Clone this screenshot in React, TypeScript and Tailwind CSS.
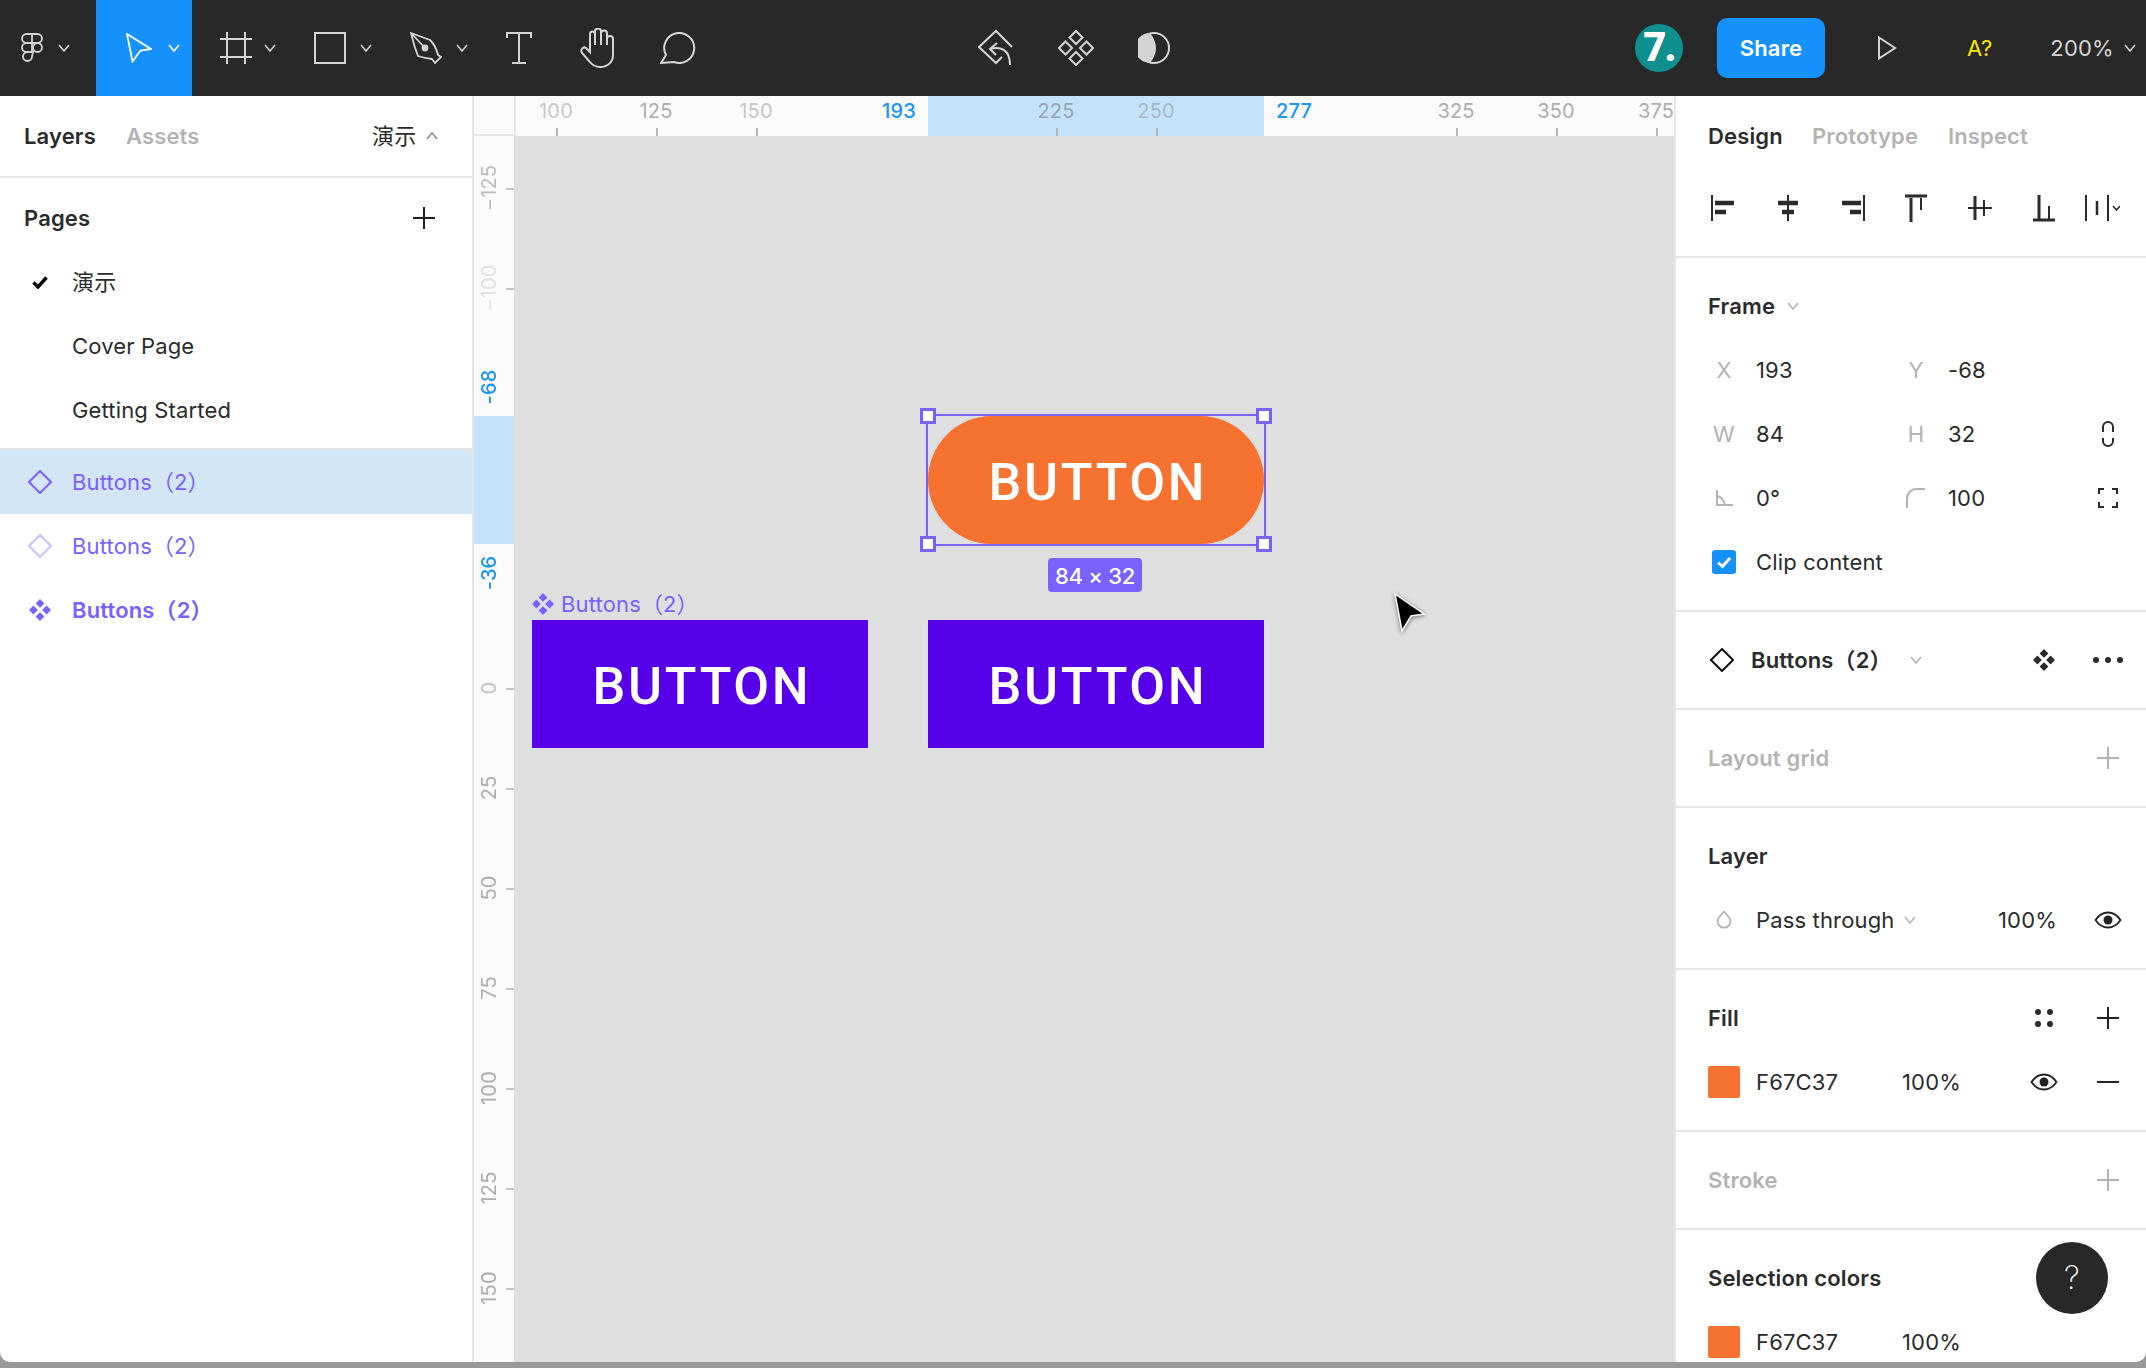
import React from 'react';

const PURPLE = '#7b61ff';

// ruler scale: 1 unit = 4px on screen
const TOP_TICKS = [
  { v: 100, c: 'text-[#c9c9c9]' },
  { v: 125, c: 'text-[#adadad]' },
  { v: 150, c: 'text-[#c6c6c6]' },
  { v: 225, c: 'text-[#98a6b1]' },
  { v: 250, c: 'text-[#a9b8c3]' },
  { v: 325, c: 'text-[#adadad]' },
  { v: 350, c: 'text-[#adadad]' },
  { v: 375, c: 'text-[#adadad]' },
];
const SIDE_TICKS = [
  { v: -125, c: 'text-[#bdbdbd]' },
  { v: -100, c: 'text-[#e2e2e2]' },
  { v: 0, c: 'text-[#c4c4c4]' },
  { v: 25, c: 'text-[#adadad]' },
  { v: 50, c: 'text-[#adadad]' },
  { v: 75, c: 'text-[#adadad]' },
  { v: 100, c: 'text-[#adadad]' },
  { v: 125, c: 'text-[#adadad]' },
  { v: 150, c: 'text-[#adadad]' },
];

function Chevron({ up, className = 'text-[#d0d0d0]' }: { up?: boolean; className?: string }) {
  return (
    <svg width="12" height="8" viewBox="0 0 12 8" fill="none" className={className}>
      <path d={up ? 'M1 7l5-6 5 6' : 'M1 1l5 6 5-6'} stroke="currentColor" strokeWidth="1.6" />
    </svg>
  );
}

function Plus({ className = 'text-[#222]' }: { className?: string }) {
  return (
    <svg width="22" height="22" viewBox="0 0 22 22" className={className}>
      <path d="M0 11h22M11 0v22" stroke="currentColor" strokeWidth="2" />
    </svg>
  );
}

function DiamondOutline({ color, size = 24 }: { color: string; size?: number }) {
  return (
    <svg width={size} height={size} viewBox="0 0 24 24" fill="none">
      <path d="M12 1l11 11-11 11L1 12z" stroke={color} strokeWidth="2" />
    </svg>
  );
}

function Diamonds({ color, size = 22 }: { color: string; size?: number }) {
  return (
    <svg width={size} height={size} viewBox="0 0 22 22" fill={color}>
      <path d="M11 0l4.400 4.400L11 8.800 6.600 4.400zM11 13.200l4.400 4.400L11 22l-4.400-4.400zM4.400 6.600L8.800 11l-4.400 4.400L0 11zM17.600 6.600L22 11l-4.400 4.400L13.200 11z" />
    </svg>
  );
}

function Eye() {
  return (
    <svg width="28" height="18" viewBox="0 0 28 18" fill="none">
      <path d="M1.500 9C5 3.800 9.200 1.500 14 1.500S23 3.800 26.500 9C23 14.200 18.800 16.500 14 16.500S5 14.200 1.500 9z" stroke="#222" strokeWidth="1.800" />
      <circle cx="14" cy="9" r="4.500" fill="#222" />
    </svg>
  );
}

function FigmaLogo() {
  return (
    <svg width="24" height="30" viewBox="0 0 24 30" fill="none" stroke="#d4d4d4" strokeWidth="1.800">
      <path d="M12 1H6.500a4.500 4.500 0 0 0 0 9H12zM12 1h5.500a4.500 4.500 0 0 1 0 9H12zM12 10H6.500a4.500 4.500 0 0 0 0 9H12z" />
      <circle cx="17.500" cy="14.500" r="4.500" />
      <path d="M12 19H6.500a4.500 4.500 0 1 0 4.500 4.500z" transform="translate(1 0)" />
    </svg>
  );
}

function TopBar() {
  return (
    <header className="flex h-24 shrink-0 items-center bg-[#282828]">
      <div className="flex h-24 w-24 items-center gap-[14px] pl-5">
        <FigmaLogo />
        <Chevron />
      </div>
      <div className="flex h-24 w-24 items-center gap-4 bg-[#1592fe] pl-[30px]">
        <svg width="26" height="30" viewBox="0 0 26 30" fill="none">
          <path d="M1 1l24 15-10.500 1.500L6.500 28.500z" stroke="#fff" strokeWidth="1.800" />
        </svg>
        <Chevron className="text-white" />
      </div>
      <div className="flex h-24 w-[98px] items-center gap-3 pl-[28px]">
        <svg width="32" height="32" viewBox="0 0 32 32" stroke="#d4d4d4" strokeWidth="2">
          <path d="M7 0v32M25 0v32M0 7h32M0 25h32" />
        </svg>
        <Chevron />
      </div>
      <div className="flex h-24 w-24 items-center gap-[14px] pl-6">
        <div className="h-8 w-8 border-2 border-[#d4d4d4]" />
        <Chevron />
      </div>
      <div className="flex h-24 w-24 items-center gap-[14px] pl-6">
        <svg width="32" height="32" viewBox="0 0 32 32" fill="none" stroke="#d4d4d4" strokeWidth="1.800">
          <path d="M1 1L20 8Q26 14 28 23L31 25L25 31L22 27Q14 26 8 24Q4 14 1 1zM1 1L15 16" />
          <circle cx="15" cy="16" r="2.500" fill="#d4d4d4" />
        </svg>
        <Chevron />
      </div>
      <div className="flex h-24 w-[70px] items-center pl-[24px]">
        <svg width="26" height="32" viewBox="0 0 26 32" fill="none" stroke="#d4d4d4" strokeWidth="2">
          <path d="M1 6V1h24v5M13 1v30M6 31h14" />
        </svg>
      </div>
      <div className="flex h-24 w-[80px] items-center pl-[28px]">
        <svg width="35" height="40" viewBox="0 0 35 40" fill="none" stroke="#d4d4d4" strokeWidth="2">
          <path d="M10 24V6a2.500 2.500 0 0 1 5 0V3.500a3 3 0 0 1 6 0v2a3 3 0 0 1 6 0V11a3 3 0 0 1 6 0v16c0 7-5 12-13 12-5 0-8-2-11-6l-7-8c-2-3 1-7 4-5z" />
          <path d="M15 6v11M21 5v12M27 6v11" />
        </svg>
      </div>
      <div className="flex h-24 w-[96px] items-center pl-[28px]">
        <svg width="36" height="32" viewBox="0 0 36 32" fill="none" stroke="#d4d4d4" strokeWidth="2">
          <path d="M6 23L1 31l13-1A15 15 0 1 0 6 23z" />
        </svg>
      </div>

      <div className="ml-[250px] flex h-24 w-[80px] items-center">
        <svg width="36" height="38" viewBox="0 0 36 38" fill="none" stroke="#d4d4d4" strokeWidth="2">
          <path d="M34 18L18 2 1 18l17 16 6-6" />
          <path d="M19 14l-7 6 6 6M12 20c10-3 20 0 20 16" />
        </svg>
      </div>
      <div className="flex h-24 w-[80px] items-center">
        <svg width="36" height="36" viewBox="0 0 36 36" fill="none" stroke="#d4d4d4" strokeWidth="2">
          <path d="M18 1l6.500 6.500L18 14l-6.500-6.500zM18 22l6.500 6.500L18 35l-6.500-6.500zM7.500 11.500L14 18l-6.500 6.500L1 18zM28.500 11.500L35 18l-6.500 6.500L22 18z" />
        </svg>
      </div>
      <div className="flex h-24 w-[497px] items-center">
        <svg width="32" height="32" viewBox="0 0 32 32">
          <circle cx="16" cy="16" r="15" fill="none" stroke="#d4d4d4" strokeWidth="2" />
          <path d="M12 1A15 15 0 0 0 12 31Q24 16 12 1z" fill="#d4d4d4" />
        </svg>
      </div>

      <div className="flex h-12 w-12 items-center justify-center rounded-full bg-[#0f8f8e] font-['Roboto',sans-serif] text-[40px] leading-none font-black tracking-[-2px] text-white">
        7.
      </div>
      <button className="ml-[34px] h-[60px] w-[108px] rounded-[10px] bg-[#1592fe] text-[22px] font-semibold text-white">
        Share
      </button>
      <svg width="20" height="24" viewBox="0 0 20 24" fill="none" className="ml-[52px]">
        <path d="M2 1.500L18 12 2 22.500z" stroke="#d4d4d4" strokeWidth="2" />
      </svg>
      <span className="ml-[70px] text-[22px] text-[#ffe600]">A?</span>
      <span className="ml-[58px] text-[22px] text-[#d4d4d4]">200%</span>
      <span className="ml-[10px]">
        <Chevron />
      </span>
    </header>
  );
}

function PageRow({ children, check }: { children: React.ReactNode; check?: boolean }) {
  return (
    <div className="flex h-16 items-center text-[#2b2b2b]">
      <div className="flex w-[72px] justify-center pl-[8px]">
        {check && (
          <svg width="16" height="13" viewBox="0 0 16 13" fill="none">
            <path d="M1.500 6.500L6 11l8.500-9.500" stroke="#000" strokeWidth="3.400" />
          </svg>
        )}
      </div>
      {children}
    </div>
  );
}

function LayerRow({ icon, selected, bold }: { icon: React.ReactNode; selected?: boolean; bold?: boolean }) {
  return (
    <div className={`flex h-16 items-center text-[#7b61ff] ${selected ? 'bg-[#d3e6f5]' : ''} ${bold ? 'font-semibold' : ''}`}>
      <div className="flex w-[72px] justify-center pl-[8px]">{icon}</div>
      Buttons（2）
    </div>
  );
}

function LeftPanel() {
  return (
    <aside className="w-[474px] shrink-0 border-r-2 border-[#e5e5e5] bg-white">
      <div className="flex h-[82px] items-center border-b-2 border-[#e5e5e5] pl-6">
        <span className="w-[102px] font-semibold text-[#2b2b2b]">Layers</span>
        <span className="w-[246px] font-semibold text-[#b3b3b3]">Assets</span>
        <span className="w-[54px] text-[#2b2b2b]">演示</span>
        <Chevron up className="text-[#8e8e8e]" />
      </div>
      <div className="pt-2 pb-[6px]">
        <div className="flex h-16 items-center justify-between pr-[37px] pl-6">
          <span className="font-semibold text-[#2b2b2b]">Pages</span>
          <Plus />
        </div>
        <PageRow check>演示</PageRow>
        <PageRow>Cover Page</PageRow>
        <PageRow>Getting Started</PageRow>
      </div>
      <div className="border-t-2 border-[#e5e5e5]">
        <LayerRow selected icon={<DiamondOutline color={PURPLE} />} />
        <LayerRow icon={<DiamondOutline color="#c9bfff" />} />
        <LayerRow bold icon={<Diamonds color={PURPLE} />} />
      </div>
    </aside>
  );
}

function TopRuler() {
  return (
    <div className="flex h-10 shrink-0">
      <div className="w-[42px] shrink-0 border-r-2 border-b-2 border-[#e5e5e5] bg-[#fbfbfb]" />
      <div className="relative flex-1 overflow-hidden bg-[#fbfbfb]">
        <div className="absolute top-0 left-[412px] h-10 w-[336px] bg-[#c4e3fa]" />
        {TOP_TICKS.map((t) => (
          <div key={t.v} className="absolute top-0 h-10" style={{ left: t.v * 4 - 360 }}>
            <span className={`absolute top-[1px] left-0 -translate-x-1/2 text-[20px] leading-[28px] ${t.c}`}>{t.v}</span>
            <div className="absolute top-8 left-0 h-2 w-[2px] bg-[#b5b5b5]" />
          </div>
        ))}
        <span className="absolute top-[1px] left-[366px] text-[20px] leading-[28px] font-medium text-[#1c96ef]">193</span>
        <span className="absolute top-[1px] left-[760px] text-[20px] leading-[28px] font-medium text-[#1c96ef]">277</span>
      </div>
    </div>
  );
}

function SideLabel({ y, className, children }: { y: number; className: string; children: React.ReactNode }) {
  return (
    <div className="absolute left-0 flex w-[30px] -translate-y-1/2 justify-center" style={{ top: y }}>
      <span className={`rotate-180 text-[20px] leading-[24px] [writing-mode:vertical-rl] ${className}`}>{children}</span>
    </div>
  );
}

function SideRuler() {
  return (
    <div className="relative w-10 shrink-0 overflow-hidden bg-[#fbfbfb]">
      <div className="absolute top-[280px] left-0 h-32 w-10 bg-[#c4e3fa]" />
      {SIDE_TICKS.map((t) => (
        <React.Fragment key={t.v}>
          <SideLabel y={552 + t.v * 4} className={t.c}>
            {t.v === -125 || t.v === -100 ? `−${-t.v}` : t.v}
          </SideLabel>
          <div className="absolute left-8 h-[2px] w-2 bg-[#c4c4c4]" style={{ top: 552 + t.v * 4 }} />
        </React.Fragment>
      ))}
      <SideLabel y={251} className="font-medium text-[#1c96ef]">-68</SideLabel>
      <SideLabel y={437} className="font-medium text-[#1c96ef]">-36</SideLabel>
    </div>
  );
}

function ButtonBox({ className }: { className: string }) {
  return (
    <div className={`absolute flex h-32 w-[336px] items-center justify-center pt-[6px] pl-[4px] font-['Roboto',sans-serif] text-[52px] font-medium tracking-[2.7px] text-white ${className}`}>
      BUTTON
    </div>
  );
}

function Handle({ className }: { className: string }) {
  return <div className={`absolute h-4 w-4 border-[3px] border-[#7b61ff] bg-white ${className}`} />;
}

function Canvas() {
  return (
    <div className="relative flex-1 overflow-hidden bg-[#dfdfdf]">
      <ButtonBox className="top-[280px] left-[414px] rounded-[64px] bg-[#f57230]" />
      <div className="absolute top-[278px] left-[412px] h-[132px] w-[340px] border-2 border-[#7b61ff]" />
      <Handle className="top-[272px] left-[406px]" />
      <Handle className="top-[272px] left-[742px]" />
      <Handle className="top-[400px] left-[406px]" />
      <Handle className="top-[400px] left-[742px]" />
      <div className="absolute top-[422px] left-[534px] flex h-[34px] w-[94px] items-center justify-center rounded bg-[#7b61ff] pt-[1px] text-[22px] font-medium tracking-[-0.3px] text-white">
        84 × 32
      </div>
      <div className="absolute top-[452px] left-[18px] flex h-8 items-center gap-[7px] text-[#7b61ff]">
        <Diamonds color={PURPLE} />
        Buttons（2）
      </div>
      <ButtonBox className="top-[484px] left-[18px] bg-[#5500e8]" />
      <ButtonBox className="top-[484px] left-[414px] bg-[#5500e8]" />
      <svg width="34" height="42" viewBox="0 0 34 42" className="absolute top-[456px] left-[879px] drop-shadow-[0_1px_2px_rgba(0,0,0,0.5)]">
        <path d="M2 2l29 20-13 2-9 15z" fill="#000" stroke="#fff" strokeWidth="1.500" />
      </svg>
    </div>
  );
}

function Tab({ children, on, w }: { children: React.ReactNode; on?: boolean; w: string }) {
  return <span className={`${w} font-semibold ${on ? 'text-[#2b2b2b]' : 'text-[#b3b3b3]'}`}>{children}</span>;
}

function AlignIcon({ d, heavy, heavyWidth = 4.5 }: { d: string; heavy: string; heavyWidth?: number }) {
  return (
    <div className="flex w-16 justify-center">
      <svg width="32" height="32" viewBox="0 0 32 32" fill="none">
        <path d={d} stroke="#2b2b2b" strokeWidth="2" />
        <path d={heavy} stroke="#2b2b2b" strokeWidth={heavyWidth} />
      </svg>
    </div>
  );
}

function Section({ children, last }: { children: React.ReactNode; last?: boolean }) {
  return <section className={`py-4 ${last ? '' : 'border-b-2 border-[#e5e5e5]'}`}>{children}</section>;
}

function Head({ children, dim, right }: { children: React.ReactNode; dim?: boolean; right?: React.ReactNode }) {
  return (
    <div className="flex h-16 items-center justify-between pr-[6px] pl-8">
      <span className={`flex items-center gap-[12px] font-semibold ${dim ? 'text-[#b3b3b3]' : 'text-[#2b2b2b]'}`}>{children}</span>
      <div className="flex">{right}</div>
    </div>
  );
}

function Cell({ children, w = 'w-16' }: { children?: React.ReactNode; w?: string }) {
  return <div className={`flex shrink-0 items-center justify-center ${w}`}>{children}</div>;
}

function PropRow({ a, av, b, bv, icon }: { a: React.ReactNode; av: string; b: React.ReactNode; bv: string; icon?: React.ReactNode }) {
  return (
    <div className="flex h-16 items-center pl-4 text-[#2b2b2b]">
      <Cell>{a}</Cell>
      <span className="w-[128px]">{av}</span>
      <Cell>{b}</Cell>
      <span className="w-[128px]">{bv}</span>
      <Cell>{icon}</Cell>
    </div>
  );
}

function Letter({ children }: { children: string }) {
  return <span className="text-[#b3b3b3]">{children}</span>;
}

function FillRow({ eye }: { eye?: boolean }) {
  return (
    <div className="flex h-16 items-center pl-4 text-[#2b2b2b]">
      <Cell>
        <div className="h-8 w-8 rounded-[2px] bg-[#f57230]" />
      </Cell>
      <span className="w-[146px]">F67C37</span>
      <span className="w-[110px]">100%</span>
      {eye && (
        <>
          <Cell>
            <Eye />
          </Cell>
          <Cell>
            <div className="h-[2px] w-[22px] bg-[#222]" />
          </Cell>
        </>
      )}
    </div>
  );
}

function RightPanel() {
  return (
    <aside className="relative w-[472px] shrink-0 overflow-hidden border-l-2 border-[#e5e5e5] bg-white">
      <div className="flex h-20 items-center pl-8">
        <Tab on w="w-[104px]">Design</Tab>
        <Tab w="w-[136px]">Prototype</Tab>
        <Tab w="w-[90px]">Inspect</Tab>
      </div>
      <div className="flex h-[82px] items-start border-b-2 border-[#e5e5e5] pl-4">
        <div className="flex h-16 items-center">
          <AlignIcon d="M4 3v26" heavy="M7 11h19M7 20h11" />
          <AlignIcon d="M16 3v26" heavy="M6 11h20M10 20h12" />
          <AlignIcon d="M28 3v26" heavy="M6 11h19M14 20h11" />
          <AlignIcon d="M21 6v12" heavy="M5 4h22M11 6v24" heavyWidth={3} />
          <AlignIcon d="M20 8v16M4 16h24" heavy="M11 4v24" heavyWidth={3} />
          <AlignIcon d="M21 14v13" heavy="M5 28h22M11 3v24" heavyWidth={3} />
          <svg width="36" height="32" viewBox="0 0 36 32" fill="none" className="ml-[8px]">
            <path d="M2 3v26M24 3v26" stroke="#2b2b2b" strokeWidth="2" />
            <path d="M13 9v14" stroke="#2b2b2b" strokeWidth="2.500" />
            <path d="M29 14l3.500 4 3.500-4" stroke="#2b2b2b" strokeWidth="1.500" />
          </svg>
        </div>
      </div>

      <Section>
        <Head>
          Frame <Chevron className="text-[#b3b3b3]" />
        </Head>
        <PropRow a={<Letter>X</Letter>} av="193" b={<Letter>Y</Letter>} bv="-68" />
        <PropRow
          a={<Letter>W</Letter>}
          av="84"
          b={<Letter>H</Letter>}
          bv="32"
          icon={
            <svg width="14" height="28" viewBox="0 0 14 28" fill="none" stroke="#2b2b2b" strokeWidth="2">
              <path d="M2 12V7a5 5 0 0 1 10 0v5M2 18v3a5 5 0 0 0 10 0v-3" />
            </svg>
          }
        />
        <PropRow
          a={
            <svg width="18" height="16" viewBox="0 0 18 16" fill="none" stroke="#b3b3b3" strokeWidth="2">
              <path d="M2 0v15h16M2 6c4 1 7 4 8 9" />
            </svg>
          }
          av="0°"
          b={
            <svg width="20" height="20" viewBox="0 0 20 20" fill="none" stroke="#b3b3b3" strokeWidth="2">
              <path d="M1 20V11C1 5 5 1 11 1h8" />
            </svg>
          }
          bv="100"
          icon={
            <svg width="20" height="20" viewBox="0 0 20 20" fill="none" stroke="#2b2b2b" strokeWidth="2">
              <path d="M1 6V1h5M14 1h5v5M19 14v5h-5M6 19H1v-5" />
            </svg>
          }
        />
        <div className="flex h-16 items-center pl-4 text-[#2b2b2b]">
          <Cell>
            <div className="flex h-6 w-6 items-center justify-center rounded-[3px] bg-[#1592fe]">
              <svg width="16" height="13" viewBox="0 0 16 13" fill="none">
                <path d="M2 6.500l4.500 4L14 2" stroke="#fff" strokeWidth="3" />
              </svg>
            </div>
          </Cell>
          Clip content
        </div>
      </Section>

      <Section>
        <div className="flex h-16 items-center pl-4 text-[#2b2b2b]">
          <Cell w="w-[59px]">
            <DiamondOutline color="#111" />
          </Cell>
          <span className="w-[133px] font-semibold">Buttons（2）</span>
          <Cell>
            <Chevron className="text-[#b3b3b3]" />
          </Cell>
          <Cell />
          <Cell>
            <Diamonds color="#2b2b2b" />
          </Cell>
          <Cell>
            <svg width="30" height="6" viewBox="0 0 30 6" fill="#2b2b2b">
              <circle cx="3" cy="3" r="3" />
              <circle cx="15" cy="3" r="3" />
              <circle cx="27" cy="3" r="3" />
            </svg>
          </Cell>
        </div>
      </Section>

      <Section>
        <Head dim right={<Cell><Plus className="text-[#b3b3b3]" /></Cell>}>Layout grid</Head>
      </Section>

      <Section>
        <Head>Layer</Head>
        <div className="flex h-16 items-center pl-4 text-[#2b2b2b]">
          <Cell>
            <svg width="16" height="20" viewBox="0 0 16 20" fill="none">
              <path d="M8 1.500l4.500 5a6.500 6.500 0 1 1-9 0z" stroke="#b3b3b3" strokeWidth="1.800" />
            </svg>
          </Cell>
          <span className="w-[148px]">Pass through</span>
          <span className="w-[94px]">
            <Chevron className="text-[#b3b3b3]" />
          </span>
          <span className="w-[78px]">100%</span>
          <Cell>
            <Eye />
          </Cell>
        </div>
      </Section>

      <Section>
        <Head
          right={
            <>
              <Cell>
                <svg width="18" height="18" viewBox="0 0 18 18" fill="#2b2b2b">
                  <circle cx="3" cy="3" r="3" />
                  <circle cx="15" cy="3" r="3" />
                  <circle cx="3" cy="15" r="3" />
                  <circle cx="15" cy="15" r="3" />
                </svg>
              </Cell>
              <Cell>
                <Plus />
              </Cell>
            </>
          }
        >
          Fill
        </Head>
        <FillRow eye />
      </Section>

      <Section>
        <Head dim right={<Cell><Plus className="text-[#b3b3b3]" /></Cell>}>Stroke</Head>
      </Section>

      <Section last>
        <Head>Selection colors</Head>
        <FillRow />
      </Section>

      <div className="absolute top-[1146px] left-[360px] flex h-[72px] w-[72px] items-center justify-center rounded-full bg-[#282828] text-[32px] font-extralight text-white">
        ?
      </div>
    </aside>
  );
}

export default function App() {
  return (
    <div className="flex h-[1368px] w-[2146px] flex-col overflow-hidden bg-[#999] [font-family:Inter,'Noto_Sans_CJK_SC',sans-serif] text-[22px] leading-none tracking-[0.15px]">
      <div className="flex h-[1362px] flex-col overflow-hidden rounded-b-[10px]">
        <TopBar />
        <div className="flex min-h-0 flex-1">
          <LeftPanel />
          <main className="flex min-w-0 flex-1 flex-col">
            <TopRuler />
            <div className="flex min-h-0 flex-1">
              <SideRuler />
              <Canvas />
            </div>
          </main>
          <RightPanel />
        </div>
      </div>
    </div>
  );
}
